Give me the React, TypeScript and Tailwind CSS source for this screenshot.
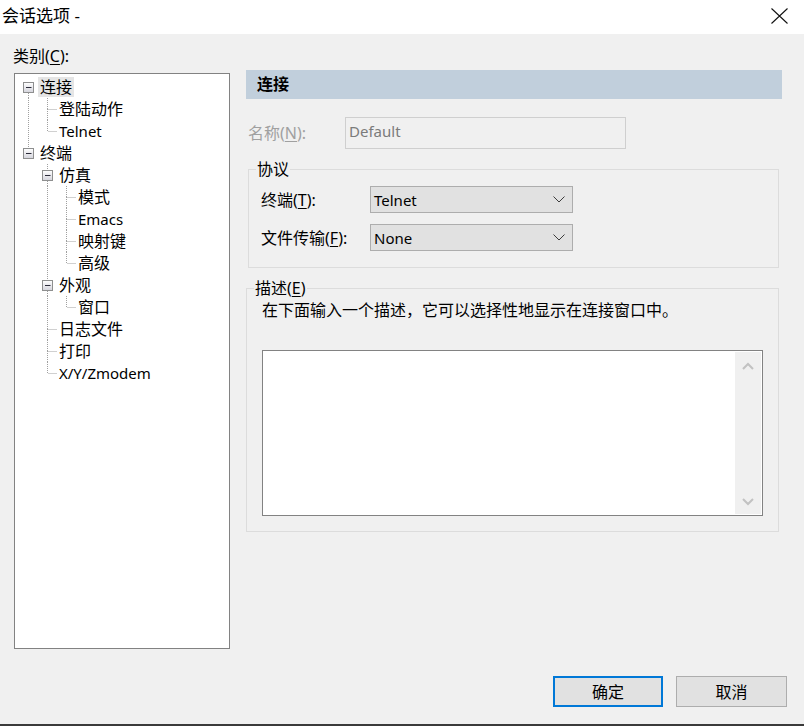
import React from "react";

type Row = {
  label: string;
  depth: number;
  anc: boolean[];
  box?: boolean;
  up?: boolean;
  down?: boolean;
  selected?: boolean;
  latin?: boolean;
};

const rows: Row[] = [
  { label: "连接", depth: 0, anc: [], box: true, up: false, down: true, selected: true },
  { label: "登陆动作", depth: 1, anc: [true], up: true, down: true },
  { label: "Telnet", depth: 1, anc: [true], up: true, down: false, latin: true },
  { label: "终端", depth: 0, anc: [], box: true, up: true, down: false },
  { label: "仿真", depth: 1, anc: [false], box: true, up: true, down: true },
  { label: "模式", depth: 2, anc: [false, true], up: true, down: true },
  { label: "Emacs", depth: 2, anc: [false, true], up: true, down: true, latin: true },
  { label: "映射键", depth: 2, anc: [false, true], up: true, down: true },
  { label: "高级", depth: 2, anc: [false, true], up: true, down: false },
  { label: "外观", depth: 1, anc: [false], box: true, up: true, down: true },
  { label: "窗口", depth: 2, anc: [false, true], up: true, down: false },
  { label: "日志文件", depth: 1, anc: [false], up: true, down: true },
  { label: "打印", depth: 1, anc: [false], up: true, down: true },
  { label: "X/Y/Zmodem", depth: 1, anc: [false], up: true, down: false, latin: true },
];

const LINE = "#a0a0a0";

function Connector({ row }: { row: Row }) {
  const w = 19 * (row.depth + 1);
  const cx = 9.5 + 19 * row.depth;
  return (
    <svg width={w} height={22} className="shrink-0 block">
      <defs>
        <linearGradient id="bx" x1="0" y1="0" x2="0" y2="1">
          <stop offset="0" stopColor="#ffffff" />
          <stop offset="1" stopColor="#d4d4dc" />
        </linearGradient>
      </defs>
      {row.anc.map((on, k) =>
        on ? (
          <line key={k} x1={9.5 + 19 * k} y1={0} x2={9.5 + 19 * k} y2={22} stroke={LINE} strokeDasharray="1 1" />
        ) : null
      )}
      {row.up && (
        <line x1={cx} y1={0} x2={cx} y2={row.box ? 6 : 11.5} stroke={LINE} strokeDasharray="1 1" />
      )}
      {row.down && (
        <line x1={cx} y1={row.box ? 17 : 11} x2={cx} y2={22} stroke={LINE} strokeDasharray="1 1" />
      )}
      {!row.box && (
        <line x1={cx + 1} y1={11.5} x2={cx + 10} y2={11.5} stroke={LINE} strokeDasharray="1 1" />
      )}
      {row.box && (
        <g>
          <rect x={cx - 5} y={6.5} width={10} height={10} fill="url(#bx)" stroke="#8e8f8f" />
          <line x1={cx - 2.5} y1={11.5} x2={cx + 3} y2={11.5} stroke="#2b2b3a" />
        </g>
      )}
    </svg>
  );
}

function Chevron() {
  return (
    <svg width="12" height="7" viewBox="0 0 12 7" className="block">
      <path d="M0.5 0.5 L6 6 L11.5 0.5" fill="none" stroke="#3c3c3c" strokeWidth="1" />
    </svg>
  );
}

function Select({ value }: { value: string }) {
  return (
    <div className="w-[203px] h-[27px] bg-[#e1e1e1] border border-[#adadad] flex items-center justify-between pl-[3px] pr-[7px]">
      <span className="text-[15px] leading-[20px] text-black">{value}</span>
      <Chevron />
    </div>
  );
}

export default function App() {
  return (
    <div className="w-[804px] h-[726px] bg-[#f0f0f0] flex flex-col border-b-2 border-[#3a3a3a] font-['Noto_Sans','Noto_Sans_CJK_SC',sans-serif] text-black overflow-hidden">
      {/* Title bar */}
      <div className="h-[34px] bg-white flex items-start justify-between shrink-0">
        <div className="pl-[2px] text-[17px] leading-[31px]">会话选项 -</div>
        <svg width="17" height="16" viewBox="0 0 17 16" className="mt-[8px] mr-[16px]">
          <path d="M0.5 0.5 L16.5 15.5 M16.5 0.5 L0.5 15.5" stroke="#111" strokeWidth="1.1" />
        </svg>
      </div>

      {/* Main */}
      <div className="flex flex-row items-start">
        {/* Left column */}
        <div className="w-[246px] shrink-0 flex flex-col">
          <div className="pl-[13px] mt-[12px] h-[20px] text-[16px] leading-[20px]">
            类别(<span className="underline underline-offset-2">C</span>):
          </div>
          <div className="ml-[14px] mt-[7px] w-[216px] h-[576px] bg-white border border-[#828282] pl-[4px] pt-[2px]">
            {rows.map((r, i) => (
              <div key={i} className="h-[22px] flex items-center">
                <Connector row={r} />
                <span
                  className={
                    "px-[2px] leading-[20px] whitespace-nowrap " +
                    (r.latin ? "text-[15px] " : "text-[16px] ") +
                    (r.selected ? "bg-[#e5e5e5]" : "")
                  }
                >
                  {r.label}
                </span>
              </div>
            ))}
          </div>
        </div>

        {/* Right column */}
        <div className="w-[536px] shrink-0 flex flex-col">
          <div className="mt-[36px] h-[29px] bg-[#c1cfdc] pl-[11px] text-[16px] leading-[29px] font-bold">
            连接
          </div>

          <div className="mt-[18px] ml-[2px] flex items-center h-[32px]">
            <div className="w-[97px] text-[16px] leading-[20px] text-[#a0a0a0]">
              名称(<span className="underline underline-offset-2">N</span>):
            </div>
            <div className="w-[281px] h-[32px] border border-[#cfcfcf] bg-[#f0f0f0] pl-[3px] pt-[3px] text-[15px] leading-[20px] text-[#7b7b7b]">
              Default
            </div>
          </div>

          {/* Protocol group */}
          <div className="relative mt-[20px] ml-[2px] w-[531px] h-[99px] border border-[#dcdcdc]">
            <div className="absolute left-[7px] top-[-11px] px-[1px] bg-[#f0f0f0] text-[16px] leading-[20px]">
              协议
            </div>
            <div className="pl-[12px] pt-[16px] flex flex-col gap-[11px]">
              <div className="flex items-center">
                <div className="w-[109px] text-[16px] leading-[20px]">
                  终端(<span className="underline underline-offset-2">T</span>):
                </div>
                <Select value="Telnet" />
              </div>
              <div className="flex items-center">
                <div className="w-[109px] text-[16px] leading-[20px]">
                  文件传输(<span className="underline underline-offset-2">F</span>):
                </div>
                <Select value="None" />
              </div>
            </div>
          </div>

          {/* Description group */}
          <div className="relative mt-[20px] w-[533px] h-[244px] border border-[#dcdcdc]">
            <div className="absolute left-[7px] top-[-11px] px-[1px] bg-[#f0f0f0] text-[16px] leading-[20px]">
              描述(<span className="underline underline-offset-2">E</span>)
            </div>
            <div className="pl-[15px] mt-[11px] text-[16px] leading-[20px] whitespace-nowrap">
              在下面输入一个描述，它可以选择性地显示在连接窗口中。
            </div>
            <div className="ml-[15px] mt-[30px] w-[501px] h-[166px] bg-white border border-[#828282] flex justify-end p-[1px]">
              <div className="w-[26px] h-full bg-[#f0f0f0] flex flex-col items-center justify-between pt-[10px] pb-[8px]">
                <svg width="12" height="8" viewBox="0 0 12 8">
                  <path d="M1 7 L6 2 L11 7" fill="none" stroke="#c2c2c2" strokeWidth="2" />
                </svg>
                <svg width="12" height="8" viewBox="0 0 12 8">
                  <path d="M1 1 L6 6 L11 1" fill="none" stroke="#c2c2c2" strokeWidth="2" />
                </svg>
              </div>
            </div>
          </div>
        </div>
      </div>

      {/* Footer buttons */}
      <div className="mt-auto pb-[17px] pr-[17px] flex justify-end gap-[13px]">
        <button className="w-[110px] h-[31px] bg-[#e1e1e1] border-2 border-[#0078d7] text-[16px] leading-[20px]">
          确定
        </button>
        <button className="w-[111px] h-[31px] bg-[#e1e1e1] border border-[#adadad] text-[16px] leading-[20px]">
          取消
        </button>
      </div>
    </div>
  );
}
